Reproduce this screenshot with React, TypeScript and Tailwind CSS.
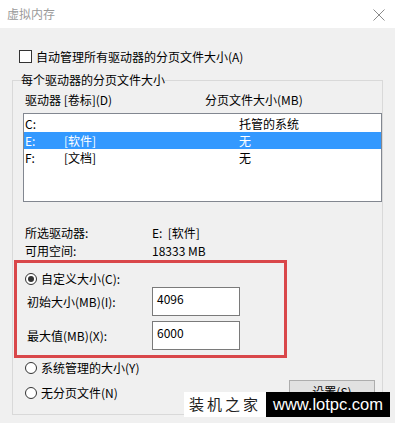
import React from "react";

const font = { fontFamily: '"Noto Sans CJK SC", "Noto Sans", sans-serif' };

function Radio({ checked }: { checked?: boolean }) {
  return (
    <span className="flex h-[12px] w-[12px] items-center justify-center rounded-full border border-[#333333] bg-white">
      {checked && <span className="h-[6px] w-[6px] rounded-full bg-[#333333]" />}
    </span>
  );
}

function Row({ a, b, c, selected }: { a: string; b: string; c: string; selected?: boolean }) {
  return (
    <div
      className={
        "flex h-[17px] items-center leading-[17px] " +
        (selected ? "bg-[#3399ff] text-white" : "text-black")
      }
    >
      <span className="w-[40px] pl-[1px]">{a}</span>
      <span className="w-[175px]">{b}</span>
      <span>{c}</span>
    </div>
  );
}

export default function App() {
  return (
    <div
      className="relative h-[423px] w-[395px] overflow-hidden bg-[#f0f0f0] text-[12px] text-black"
      style={font}
    >
      {/* Title bar */}
      <div className="flex h-[28px] items-center justify-between bg-white pl-[7px] pr-[10px]">
        <span className="leading-[16px] text-[#9a9a9a]">虚拟内存</span>
        <svg width="12" height="12" viewBox="0 0 12 12" className="mt-[1px]">
          <path d="M0.5 0.5 L11.5 11.5 M11.5 0.5 L0.5 11.5" stroke="#8a8a8a" strokeWidth="1" fill="none" />
        </svg>
      </div>

      {/* Checkbox */}
      <div className="mt-[22px] flex h-[13px] items-center pl-[19px]">
        <span className="h-[13px] w-[13px] border border-[#333333] bg-white" />
        <span className="ml-[4px] leading-[16px]">自动管理所有驱动器的分页文件大小(A)</span>
      </div>

      {/* Group box */}
      <fieldset className="ml-[12px] mt-[9px] w-[369px] border border-[#d9d9d9] px-0 pb-[11px] pt-0">
        <legend className="ml-[8px] px-0 leading-[16px]">每个驱动器的分页文件大小</legend>

        <div className="mt-[4px] flex h-[16px] items-center pl-[12px] leading-[16px]">
          <span className="w-[180px]">驱动器 [卷标](D)</span>
          <span>分页文件大小(MB)</span>
        </div>

        <div className="ml-[10px] mt-[5px] h-[89px] w-[359px] border border-[#828790] bg-white pt-[1px]">
          <Row a="C:" b="" c="托管的系统" />
          <Row a="E:" b="[软件]" c="无" selected />
          <Row a="F:" b="[文档]" c="无" />
        </div>

        <div className="mt-[21px] flex h-[19px] items-center pl-[12px] leading-[19px]">
          <span className="w-[127px]">所选驱动器:</span>
          <span>E:&nbsp;&nbsp;[软件]</span>
        </div>
        <div className="flex h-[18px] items-center pl-[12px] leading-[18px]">
          <span className="w-[127px]">可用空间:</span>
          <span>18333 MB</span>
        </div>

        {/* Red highlight box */}
        <div className="ml-[1px] w-[273px] border-[3px] border-[#d9474a] pb-[5px]">
          <div className="mt-[8px] flex h-[16px] items-center pl-[8px] leading-[16px]">
            <Radio checked />
            <span className="ml-[4px]">自定义大小(C):</span>
          </div>
          <div className="flex h-[29px] items-center pl-[10px]">
            <span className="w-[125px] leading-[16px]">初始大小(MB)(I):</span>
            <div className="h-[29px] w-[88px] border border-[#7a7a7a] bg-white pl-[4px] pt-[3px] leading-[16px]">
              4096
            </div>
          </div>
          <div className="mt-[5px] flex h-[29px] items-center pl-[10px]">
            <span className="w-[125px] leading-[16px]">最大值(MB)(X):</span>
            <div className="h-[29px] w-[88px] border border-[#7a7a7a] bg-white pl-[4px] pt-[3px] leading-[16px]">
              6000
            </div>
          </div>
        </div>

        <div className="mt-[2px] flex h-[16px] items-center pl-[12px] leading-[16px]">
          <Radio />
          <span className="ml-[4px]">系统管理的大小(Y)</span>
        </div>
        <div className="mt-[4px] flex h-[23px] items-center justify-between pl-[12px] pr-[7px]">
          <div className="mt-[3px] flex items-center leading-[16px]">
            <Radio />
            <span className="ml-[4px]">无分页文件(N)</span>
          </div>
          <div className="flex h-[23px] w-[86px] items-center justify-center border border-[#adadad] bg-[#e1e1e1] leading-[16px]">
            设置(S)
          </div>
        </div>
      </fieldset>

      {/* Watermark overlay */}
      <div className="absolute left-[184px] top-[392px] flex h-[25px]">
        <div className="flex w-[82px] items-center justify-center bg-white text-[15px] tracking-[3px] text-[#222]">
          装机之家
        </div>
        <div
          className="flex w-[124px] items-center justify-center bg-black text-[16.5px] text-white"
          style={{ fontFamily: '"Liberation Sans", Arial, sans-serif' }}
        >
          www.lotpc.com
        </div>
      </div>
    </div>
  );
}
